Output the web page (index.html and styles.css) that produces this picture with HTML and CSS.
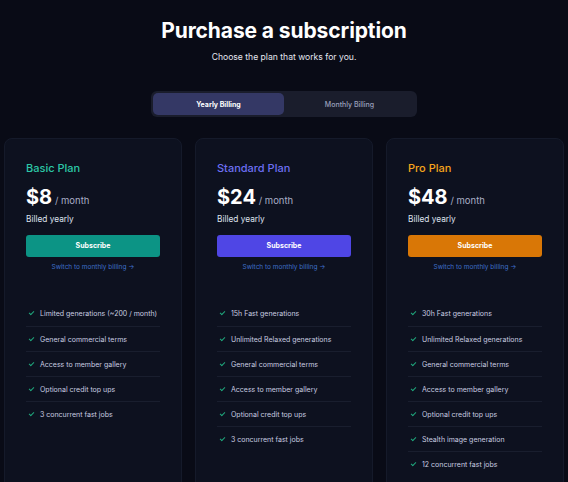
FILE: index.html
```html
<!DOCTYPE html>
<html>
<head>
<meta charset="utf-8">
<meta name="viewport" content="initial-scale=1">
<title>Purchase a subscription</title>
<link rel="stylesheet" href="styles.css">
</head>
<body>
<div id="head">
	<h1>Purchase a subscription</h1>
	<p>Choose the plan that works for you.</p>
</div>
<div id="toggle">
	<button class="on">Yearly Billing</button>
	<button>Monthly Billing</button>
</div>
<div id="plans">
	<div class="plan basic">
		<div class="top">
			<h2>Basic Plan</h2>
			<div class="price"><b>$8</b> <span>/ month</span></div>
			<div class="billed">Billed yearly</div>
			<button class="sub">Subscribe</button>
			<a class="switch">Switch to monthly billing &rarr;</a>
		</div>
		<ul>
			<li>Limited generations (~200 / month)</li>
			<li>General commercial terms</li>
			<li>Access to member gallery</li>
			<li>Optional credit top ups</li>
			<li>3 concurrent fast jobs</li>
		</ul>
	</div>
	<div class="plan standard">
		<div class="top">
			<h2>Standard Plan</h2>
			<div class="price"><b>$24</b> <span>/ month</span></div>
			<div class="billed">Billed yearly</div>
			<button class="sub">Subscribe</button>
			<a class="switch">Switch to monthly billing &rarr;</a>
		</div>
		<ul>
			<li>15h Fast generations</li>
			<li>Unlimited Relaxed generations</li>
			<li>General commercial terms</li>
			<li>Access to member gallery</li>
			<li>Optional credit top ups</li>
			<li>3 concurrent fast jobs</li>
		</ul>
	</div>
	<div class="plan pro">
		<div class="top">
			<h2>Pro Plan</h2>
			<div class="price"><b>$48</b> <span>/ month</span></div>
			<div class="billed">Billed yearly</div>
			<button class="sub">Subscribe</button>
			<a class="switch">Switch to monthly billing &rarr;</a>
		</div>
		<ul>
			<li>30h Fast generations</li>
			<li>Unlimited Relaxed generations</li>
			<li>General commercial terms</li>
			<li>Access to member gallery</li>
			<li>Optional credit top ups</li>
			<li>Stealth image generation</li>
			<li>12 concurrent fast jobs</li>
		</ul>
	</div>
</div>
</body>
</html>
```

FILE: styles.css
```css
html, body { margin: 0; padding: 0; background: #090b16; color: #fff; font: normal 10px/1.3 'Inter', 'Noto Sans', sans-serif; }
h1, h2, p, ul { margin: 0; padding: 0; }
button { font-family: inherit; border: 0; cursor: pointer; }

#head { text-align: center; padding-top: 18px; }
#head h1 { font-size: 21px; font-weight: 700; letter-spacing: -0.1px; line-height: 26px; }
#head p { margin-top: 8px; font-size: 8.6px; color: #e4e6f0; }

#toggle { display: flex; width: 262px; margin: 28px auto 0; padding: 2px; border-radius: 6px; background: #1a1d2c; }
#toggle button { flex: 1; height: 22px; border-radius: 5px; background: transparent; color: #9aa0bc; font-size: 7px; font-weight: 500; }
#toggle button.on { background: #343865; color: #fff; font-weight: 700; }

#plans { display: grid; grid-template-columns: repeat(3, 178px); gap: 13px; justify-content: center; margin-top: 21px; }
.plan { height: 380px; border: 1px solid #151a2a; border-radius: 8px; background: #0d111f; }
.top { padding: 22px 21px 0; }
.plan h2 { font-size: 11px; font-weight: 500; line-height: 14px; }
.basic h2 { color: #2cc7a6; }
.standard h2 { color: #6c6ff2; }
.pro h2 { color: #f5a51c; }
.price { margin-top: 9px; line-height: 26px; }
.price b { font-size: 20px; font-weight: 700; }
.price span { font-size: 9.5px; color: #a9aec6; }
.billed { margin-top: 0; font-size: 8.3px; color: #dfe2ee; }
.sub { display: block; width: 100%; height: 22px; margin-top: 10px; border-radius: 3px; color: #fff; font-size: 7px; font-weight: 700; }
.basic .sub { background: #0c9485; }
.standard .sub { background: #4f46e5; }
.pro .sub { background: #d97706; }
.switch { display: block; margin-top: 6px; text-align: center; font-size: 6.5px; color: #3e6fc9; }

.plan ul { margin: 30px 21px 0; }
.plan li { list-style-type: none; display: flex; align-items: center; height: 24px; border-top: 1px solid #191e2e; font-size: 7px; color: #c9cde0; white-space: nowrap; }
.plan li:first-child { border-top: 0; height: 25px; }
.plan li::before { content: ''; flex: none; width: 4px; height: 2px; margin: 0 6px 2px 3px; border-left: 1px solid #1fa67c; border-bottom: 1px solid #1fa67c; transform: rotate(-45deg); }
```
